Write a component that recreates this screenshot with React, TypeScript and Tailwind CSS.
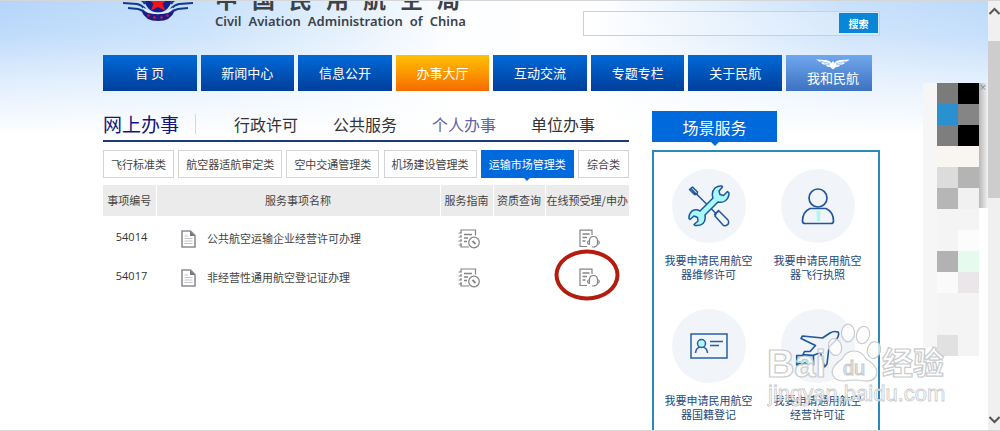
import type { ReactNode } from 'react'
import clsx from 'clsx'

const NAV = ['首 页', '新闻中心', '信息公开', '办事大厅', '互动交流', '专题专栏', '关于民航']
const SECTIONS = ['行政许可', '公共服务', '个人办事', '单位办事']
const CATEGORIES = ['飞行标准类', '航空器适航审定类', '空中交通管理类', '机场建设管理类', '运输市场管理类', '综合类']
const ROWS = [
  { id: '54014', name: '公共航空运输企业经营许可办理' },
  { id: '54017', name: '非经营性通用航空登记证办理', marked: true },
]
const BLOCKS = [
  'bg-[#7b7b7b]', 'bg-black',
  'bg-[#2a90cf]', 'bg-[#858585]',
  'bg-[#7e7e7e]', 'bg-black',
  'bg-[#f9f6f2]', 'bg-[#f9f6f2]',
  'bg-[#dcdcdc]', 'bg-[#b4b4b4]',
  'bg-[#b6b6b6]', 'bg-[#f1f1f1]',
  'bg-[#f4f4f4]', 'bg-[#f4f4f4]',
  'bg-[#f4f4f4]', 'bg-[#fcfcfc]',
  'bg-[#b2b2b2]', 'bg-[#e6fbee]',
  'bg-[#fafafa]', 'bg-[#eae6ea]',
  'bg-[#f4f4f4]', 'bg-[#f4f4f4]',
  'bg-[#f4f4f4]', 'bg-[#f4f4f4]',
  'bg-[#e1e1e1]', 'bg-[#f4f4f4]',
]

function Emblem() {
  return (
    <svg width="70" height="40" viewBox="0 0 70 40" className="shrink-0" aria-hidden="true">
      <g fill="none" stroke="#123a8c" strokeWidth="2.200">
        <path d="M0 22 L14 23 Q19 24 22 28" />
        <path d="M5 27 L15 28 Q20 29 24 33" />
        <path d="M10 17 L16 18 Q20 19 22 23" />
        <path d="M70 22 L56 23 Q51 24 48 28" />
        <path d="M65 27 L55 28 Q50 29 46 33" />
        <path d="M60 17 L54 18 Q50 19 48 23" />
      </g>
      <circle cx="35" cy="18" r="13.500" fill="#14208c" />
      <path d="M18.500 30 Q26 33 35 33 Q44 33 51.500 30 Q48 40 35 40 Q22 40 18.500 30 Z" fill="#1c1c88" />
      <path d="M20 27 Q26 32.500 35 32.500 Q44 32.500 50 27" fill="none" stroke="#e4effc" strokeWidth="1.300" />
      <path d="M35 11 L38 18 H45 L39.500 22.500 L42 29.500 L35 26 L28 29.500 L30.500 22.500 L25 18 H32 Z" fill="#f5141c" />
      <g fill="#d81c34">
        <circle cx="25.500" cy="34.500" r="1.300" />
        <circle cx="31.500" cy="36.500" r="1.300" />
        <circle cx="38.500" cy="36.500" r="1.300" />
        <circle cx="44.500" cy="34.500" r="1.300" />
      </g>
    </svg>
  )
}

function WingsIcon() {
  return (
    <svg width="34" height="11" viewBox="0 0 34 11" fill="#fff" aria-hidden="true">
      <path d="M0 0.500 L10 1 Q14 1.500 15.500 4 L17 2 L18.500 4 Q20 1.500 24 1 L34 0.500 Q31 3 27 3.500 L29 4 Q27 6 23 6.200 L24 7 Q22 8 20 8 L17 10.500 L14 8 Q12 8 10 7 L11 6.200 Q7 6 5 4 L7 3.500 Q3 3 0 0.500 Z" />
      <path d="M4 2.200 L14 4.500 M8 4.800 L14 6 M30 2.200 L20 4.500 M26 4.800 L20 6" stroke="#6a9fe2" strokeWidth="0.600" />
    </svg>
  )
}

function DocIcon() {
  return (
    <svg width="15" height="18" viewBox="0 0 15 18" aria-hidden="true">
      <path d="M1 1 H9.500 L14 5.500 V17 H1 Z" fill="#fff" stroke="#8c8c94" strokeWidth="1.600" />
      <path d="M9 1 V6 H14 Z" fill="#777780" />
      <path d="M3.500 6 H7 M3.500 8.500 H11.500 M3.500 11 H11.500 M3.500 13.500 H11.500" stroke="#c4c4c4" />
    </svg>
  )
}

function GuideIcon() {
  return (
    <svg width="22" height="20" viewBox="0 0 22 20" fill="none" stroke="#848484" strokeWidth="1.200" aria-hidden="true">
      <path d="M3 4 V1 H17.500 V6.500 M3 6 V8 M3 10 V12 M3 14 V18 H11" />
      <path d="M0.500 4 H4 M0.500 8 H4 M0.500 12 H4 M0.500 16 H4" />
      <path d="M6 5.500 H14 M6 9 H10 M6 12.500 H9" strokeWidth="1.400" />
      <circle cx="16" cy="13.500" r="5.300" fill="#fff" />
      <path d="M14.500 12 L17.500 15" strokeWidth="1.800" />
    </svg>
  )
}

function OnlineIcon() {
  return (
    <svg width="21" height="20" viewBox="0 0 21 20" fill="none" stroke="#848484" strokeWidth="1.200" aria-hidden="true">
      <path d="M13 6 V1.200 H1 V17.500 H8" />
      <path d="M3.500 5 H10.500 M3.500 8.500 H8 M3.500 12 H6.500" strokeWidth="1.400" />
      <path d="M10.500 15.500 V12 Q10.500 7.500 14.500 7.500 Q18.500 7.500 18.500 12 V14.500 Q18.500 17.500 15 17.800" />
      <path d="M10.500 11.500 Q8.500 12 8.500 13.500 Q8.500 15 10.500 15.500 M18.500 11.500 Q20.300 12 20.300 13.500 Q20.300 15 18.500 15.500 M13 18 H15.500" />
    </svg>
  )
}

function ToolsIcon() {
  return (
    <svg width="42" height="42" viewBox="0 0 42 42" fill="none" stroke="#20569c" strokeWidth="1.500" strokeLinejoin="round" aria-hidden="true">
      <path d="M1.500 4.500 L4.500 2 L9.500 7 L9 9.500 L6.500 9.500 Z M3 3.500 L8 9 M8.500 9 L28 28.500" />
      <path d="M26 30 L31 25 M28.500 28 L31 26 L40 35 Q42 39 38 40.500 Q36 41 35 40 L27 31 Z" fill="#f2f5f8" />
      <path
        d="M25 13 Q23 7 27 3 Q30 0.500 34 1 L34.500 2 L31 6 L32 9.500 L35.500 10.500 L39.500 6.500 L41 8 Q41 13 37 16 Q34 18 30 17 L17 30 Q18 35 15 38.500 Q12 41 7 40.500 L6 39.500 L10 36 L9.500 32.500 L6 31 L2 34.500 L1 33.500 Q0.500 29 4 26 Q8 23.500 12 26 Z"
        fill="#a8fafa"
      />
    </svg>
  )
}

function PersonIcon() {
  return (
    <svg width="34" height="38" viewBox="0 0 34 38" fill="none" stroke="#20569c" strokeWidth="1.700" aria-hidden="true">
      <circle cx="17" cy="11" r="9" />
      <path d="M9 21.500 H25 Q32.500 25 32.500 34 Q32.500 36.500 30 36.500 H4 Q1.500 36.500 1.500 34 Q1.500 25 9 21.500 Z" />
      <path d="M15.500 25.500 H19.500 M17.500 25.500 V34" stroke="#b2f4f4" strokeWidth="3.500" />
    </svg>
  )
}

function IdCardIcon() {
  return (
    <svg width="38" height="26" viewBox="0 0 38 26" fill="none" stroke="#2560a8" strokeWidth="1.500" aria-hidden="true">
      <rect x="1" y="1" width="36" height="24" />
      <path d="M5.500 20 Q6 14 11.500 14 Q17 14 17.500 20" />
      <circle cx="11.500" cy="10.500" r="4" fill="#b4f6f6" />
      <path d="M20 8.500 H33 M20 12.500 H29" />
    </svg>
  )
}

function PlaneIcon() {
  return (
    <svg width="46" height="44" viewBox="0 0 46 44" fill="none" stroke="#20569c" strokeWidth="1.600" strokeLinejoin="round" aria-hidden="true">
      <path d="M27.500 14 L35 9 Q39 6.500 43 8 Q45 11 41 16 L34 23 L32 40 L29.500 43 L25.500 28.500 L18 31.500 L8 30.500 L9.500 27.500 L15 27.500 L20.500 21.500 L6 14.500 L7.500 12 Z" />
      <path d="M1.700 31.500 H18.500 V41 L16 39 L13 41 L10 39 L7 41 L4.500 39.500 L1.700 41 Z" fill="#b4f6f6" />
    </svg>
  )
}

function Pointer({ className }: { className: string }) {
  return (
    <svg width="8" height="4" viewBox="0 0 8 4" className={clsx('absolute left-1/2 top-full -translate-x-1/2', className)} aria-hidden="true">
      <path d="M0 0 H8 L4 4 Z" fill="currentColor" />
    </svg>
  )
}

function SceneCard({ icon, lines }: { icon: ReactNode; lines: string[] }) {
  return (
    <a href="#" className="flex flex-col items-center gap-[10px]">
      <span className="flex size-[74px] items-center justify-center rounded-full bg-[#f1f4f8]">{icon}</span>
      <span className="text-center text-[11px] leading-[14px] text-[#24487c]">
        {lines[0]}
        <br />
        {lines[1]}
      </span>
    </a>
  )
}

function SiteHeader() {
  return (
    <header className="flex h-[54px] items-start justify-between overflow-hidden">
      <div className="-mt-5 flex gap-[22px] pl-5">
        <Emblem />
        <div className="text-[#3c4248]">
          <h1 className="flex gap-[14px] text-[23px] font-bold leading-[34px]">
            {[...'中国民用航空局'].map((char) => (
              <span key={char}>{char}</span>
            ))}
          </h1>
          <p className="flex gap-[7px] font-['Noto_Sans'] text-[13px] font-semibold leading-[12px]">
            {'Civil Aviation Administration of China'.split(' ').map((word) => (
              <span key={word}>{word}</span>
            ))}
          </p>
        </div>
      </div>
      <form className="mt-[10px] flex h-[25px] w-[297px] items-start border border-[#c8d0d8] bg-white/20 p-px">
        <input type="text" aria-label="搜索" className="h-full min-w-0 flex-1 bg-transparent px-2 text-xs outline-none" />
        <button type="button" className="h-5 w-[39px] bg-[#0a86d8] text-[10px] font-bold text-white">
          搜索
        </button>
      </form>
    </header>
  )
}

function MainNav() {
  return (
    <nav className="flex h-9 gap-1 pr-2 text-[13px] text-white">
      {NAV.map((label) => (
        <a
          key={label}
          href="#"
          className={clsx(
            'flex flex-1 items-center justify-center bg-linear-to-b',
            label === '办事大厅' ? 'from-[#ffc000] to-[#f56a00]' : 'from-[#006ad8] to-[#003f9c]',
          )}
        >
          {label}
        </a>
      ))}
      <a href="#" className="flex w-[86px] flex-col items-center bg-linear-to-b from-[#70a8ee] to-[#3c72c0] pl-2 pt-1">
        <WingsIcon />
        <span className="leading-4">我和民航</span>
      </a>
    </nav>
  )
}

function ServiceTable() {
  return (
    <table className="mt-[7px] w-full table-fixed text-[11px] text-[#444]">
      <colgroup>
        <col className="w-[53px]" />
        <col />
        <col className="w-[53px]" />
        <col className="w-[52px]" />
        <col className="w-[84px]" />
      </colgroup>
      <thead>
        <tr className="h-[31px] bg-[#ebebeb]">
          {['事项编号', '服务事项名称', '服务指南', '资质查询', '在线预受理/申办'].map((label) => (
            <th key={label} className="whitespace-nowrap border-r border-white p-0 font-normal last:border-r-0">
              {label}
            </th>
          ))}
        </tr>
      </thead>
      <tbody>
        {ROWS.map((row) => (
          <tr key={row.id} className="h-[39px]">
            <td className="pl-1 pt-1 text-center font-['Open_Sans'] text-[#333]">{row.id}</td>
            <td>
              <a href="#" className="flex items-center gap-[11px] pl-[25px] pt-[6px]">
                <DocIcon />
                {row.name}
              </a>
            </td>
            <td>
              <a href="#" aria-label="服务指南" className="flex justify-center pl-1 pt-[6px]">
                <GuideIcon />
              </a>
            </td>
            <td />
            <td>
              <a href="#" aria-label="在线预受理/申办" className="relative flex justify-center pl-1 pt-[6px]">
                <OnlineIcon />
                {row.marked && (
                  <span className="absolute left-1/2 top-1/2 h-[51px] w-[65px] -translate-x-1/2 -translate-y-1/2 rounded-[50%] border-4 border-[#b41c10]" />
                )}
              </a>
            </td>
          </tr>
        ))}
      </tbody>
    </table>
  )
}

function OnlineServices() {
  return (
    <section className="min-w-0 flex-1">
      <div className="flex h-[51px] items-center border-b-2 border-[#1c3a78] pt-4">
        <h2 className="text-[19px] leading-6 text-[#14147c]">网上办事</h2>
        <span className="ml-4 h-5 w-px bg-[#d4d8e0]" />
        <div className="ml-[38px] flex gap-[35px]">
          {SECTIONS.map((label) => (
            <a key={label} href="#" className={clsx('text-base leading-6', label === '个人办事' ? 'text-[#6460a8]' : 'text-[#333]')}>
              {label}
            </a>
          ))}
        </div>
      </div>
      <div className="mt-2 flex h-7 justify-between text-[11px]">
        {CATEGORIES.map((label) => {
          const active = label === '运输市场管理类'
          return (
            <button
              key={label}
              type="button"
              className={clsx(
                'relative whitespace-nowrap border px-[7px] last:px-2',
                active ? 'border-[#006adc] bg-[#006adc] text-white' : 'border-[#d4d4d4] bg-white text-[#444]',
              )}
            >
              {label}
              {active && <Pointer className="text-[#006adc]" />}
            </button>
          )
        })}
      </div>
      <ServiceTable />
    </section>
  )
}

function SceneServices() {
  return (
    <section className="flex w-[228px] flex-col pt-5">
      <h2 className="relative flex h-[31px] w-[125px] items-center justify-center bg-[#006adc] text-base text-white">
        场景服务
        <Pointer className="text-[#006adc]" />
      </h2>
      <div className="mt-2 grid flex-1 grid-cols-2 content-start gap-y-7 border-2 border-b-0 border-[#2b88bd] bg-white pr-[6px] pt-[17px]">
        <SceneCard icon={<ToolsIcon />} lines={['我要申请民用航空', '器维修许可']} />
        <SceneCard icon={<PersonIcon />} lines={['我要申请民用航空', '器飞行执照']} />
        <SceneCard icon={<IdCardIcon />} lines={['我要申请民用航空', '器国籍登记']} />
        <SceneCard icon={<PlaneIcon />} lines={['我要申请通用航空', '经营许可证']} />
      </div>
    </section>
  )
}

function SideWidget() {
  return (
    <div className="absolute right-0 top-[82px] flex w-[65px]" aria-hidden="true">
      <div className="h-[264px] w-[14px] bg-[#f6f6f6]" />
      <div className="grid w-[42px] auto-rows-[21px] grid-cols-2">
        {BLOCKS.map((color, i) => (
          <span key={i} className={color} />
        ))}
      </div>
      <div className="relative h-[125px] flex-1 bg-linear-to-r from-[#b8b8b8] to-[#f4f4f4]">
        <span className="absolute left-0 top-0 text-[8px] leading-[7px] text-[#777]">×</span>
      </div>
    </div>
  )
}

function Watermark() {
  return (
    <svg
      width="180"
      height="90"
      viewBox="0 0 180 90"
      className="pointer-events-none absolute bottom-[21px] right-[41px]"
      fill="#fff"
      fillOpacity="0.75"
      stroke="#c8cacc"
      strokeWidth="1.200"
    >
      <text x="0" y="58" fontFamily="Liberation Sans" fontSize="38" fontWeight="700">Bai</text>
      <ellipse cx="81" cy="14" rx="6.500" ry="8.800" />
      <ellipse cx="96" cy="16" rx="6.500" ry="8.800" transform="rotate(15 96 16)" />
      <ellipse cx="68" cy="28" rx="6.500" ry="8.500" transform="rotate(-15 68 28)" />
      <ellipse cx="107" cy="31" rx="6.500" ry="8.500" transform="rotate(15 107 31)" />
      <path d="M87 32 Q95 32 99 40 Q110 46 110 54 Q108 63 98 62 Q87 60 77 62 Q66 62 65 53 Q66 46 75 40 Q79 32 87 32 Z" />
      <text x="76" y="56" fontFamily="Liberation Sans" fontSize="20">du</text>
      <text x="115" y="55" fontFamily="Noto Sans CJK SC" fontSize="31" fontWeight="700">经验</text>
      <text x="1" y="82" fontFamily="Liberation Sans" fontSize="22" strokeWidth="0.800">jingyan.baidu.com</text>
    </svg>
  )
}

function Scrollbar() {
  return (
    <div className="flex w-3 shrink-0 flex-col items-center justify-between bg-[#f0f0f0] py-1.5" aria-hidden="true">
      <svg width="12" height="8" viewBox="0 0 12 8" fill="none" stroke="#555" strokeWidth="2">
        <path d="M1.500 7 L6.500 2 L11.500 7" />
      </svg>
      <div className="mb-auto mt-[26px] h-[157px] w-full bg-[#cdcdcd]" />
      <svg width="12" height="8" viewBox="0 0 12 8" fill="none" stroke="#555" strokeWidth="2">
        <path d="M1.500 1 L6.500 6 L11.500 1" />
      </svg>
    </div>
  )
}

export default function App() {
  return (
    <div className="flex h-screen overflow-hidden border-y border-[#d4d6d8] bg-white font-['Noto_Sans_CJK_SC',sans-serif]">
      <div className="relative flex min-w-0 flex-1 flex-col bg-[linear-gradient(to_bottom,rgba(255,255,255,0)_0%,rgba(255,255,255,0.15)_25%,rgba(255,255,255,0.6)_60%,#fff_100%),linear-gradient(to_right,#b4d5fa_0%,#c4dffb_20%,#e2effd_35%,#fdfeff_46%,#fff_60%,#e4f0fd_72%,#c8e0fb_86%,#bddafa_100%)] bg-[length:100%_135px] bg-no-repeat">
        <div className="flex flex-1 flex-col pl-[103px] pr-[108px]">
          <SiteHeader />
          <MainNav />
          <main className="flex flex-1 gap-[23px]">
            <OnlineServices />
            <SceneServices />
          </main>
        </div>
        <SideWidget />
        <Watermark />
      </div>
      <Scrollbar />
    </div>
  )
}
